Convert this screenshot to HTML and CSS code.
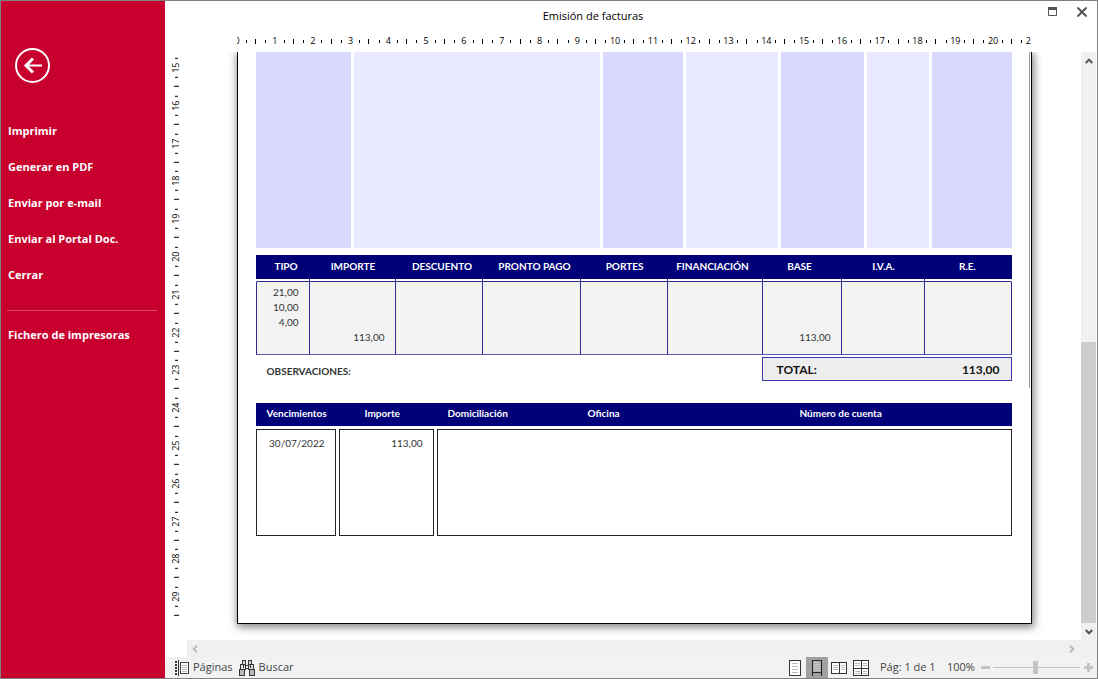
FILE: index.html
```html
<!DOCTYPE html>
<html lang="es">
<head>
<meta charset="utf-8">
<title>Emisión de facturas</title>
<link rel="stylesheet" href="styles.css">
</head>
<body>
<div class="window">
  <aside class="sidebar">
    <button class="back" type="button" aria-label="Volver">
      <svg width="36" height="36" viewBox="0 0 36 36" fill="none" stroke="#fff">
        <circle cx="18.500" cy="17.500" r="16.500" stroke-width="2"/>
        <path d="M28 17.500H12" stroke-width="2"/>
        <path d="M19 10.500L12 17.500L19 24.500" stroke-width="3"/>
      </svg>
    </button>
    <nav class="menu">
      <a href="#">Imprimir</a>
      <a href="#">Generar en PDF</a>
      <a href="#">Enviar por e-mail</a>
      <a href="#">Enviar al Portal Doc.</a>
      <a href="#">Cerrar</a>
      <hr>
      <a href="#">Fichero de impresoras</a>
    </nav>
  </aside>
  <main class="main">
    <header class="titlebar">
      <h1>Emisión de facturas</h1>
      <div class="controls">
        <button type="button" aria-label="Maximizar"><svg width="10" height="10" viewBox="0 0 10 10"><path d="M.5 1v7.500h8V1" fill="none" stroke="#555"/><path d="M0 0h9v3H0z" fill="#555"/></svg></button>
        <button type="button" aria-label="Cerrar ventana"><svg width="10" height="10" viewBox="0 0 10 10" stroke="#555" stroke-width="2"><path d="M.5 .5l9 9M9.500 .5l-9 9"/></svg></button>
      </div>
    </header>
    <div class="ruler-row">
      <div class="hruler">
        <span>0</span><span>1</span><span>2</span><span>3</span><span>4</span><span>5</span><span>6</span><span>7</span><span>8</span><span>9</span><span>10</span><span>11</span><span>12</span><span>13</span><span>14</span><span>15</span><span>16</span><span>17</span><span>18</span><span>19</span><span>20</span><span>21</span>
      </div>
    </div>
    <div class="workspace">
      <div class="vruler">
        <div class="vscale">
          <span>15</span><span>16</span><span>17</span><span>18</span><span>19</span><span>20</span><span>21</span><span>22</span><span>23</span><span>24</span><span>25</span><span>26</span><span>27</span><span>28</span><span>29</span>
        </div>
      </div>
      <div class="viewport">
        <article class="paper">
          <div class="stripes"><i></i><i></i><i></i><i></i><i></i><i></i><i></i></div>
          <table class="taxes">
            <colgroup><col class="w53"><col class="w86"><col class="w87"><col class="w98"><col class="w87"><col class="w95"><col class="w79"><col class="w83"><col class="w88"></colgroup>
            <thead>
              <tr><th class="push-m">TIPO</th><th class="push-s">IMPORTE</th><th class="push-m">DESCUENTO</th><th class="push-m">PRONTO PAGO</th><th class="push-s">PORTES</th><th class="pull-s">FINANCIACIÓN</th><th class="pull-s">BASE</th><th class="push-s">I.V.A.</th><th>R.E.</th></tr>
            </thead>
            <tbody>
              <tr class="joint"><td></td><td></td><td></td><td></td><td></td><td></td><td></td><td></td><td></td></tr>
              <tr class="first"><td>21,00</td><td></td><td></td><td></td><td></td><td></td><td></td><td></td><td></td></tr>
              <tr><td>10,00</td><td></td><td></td><td></td><td></td><td></td><td></td><td></td><td></td></tr>
              <tr><td>4,00</td><td></td><td></td><td></td><td></td><td></td><td></td><td></td><td></td></tr>
              <tr class="last"><td></td><td>113,00</td><td></td><td></td><td></td><td></td><td>113,00</td><td></td><td></td></tr>
            </tbody>
          </table>
          <div class="summary">
            <p class="notes">OBSERVACIONES:</p>
            <p class="total"><span>TOTAL:</span><span>113,00</span></p>
          </div>
          <table class="dues">
            <colgroup><col class="w83"><col class="w98"><col class="w140"><col class="w212"><col class="w223"></colgroup>
            <thead>
              <tr><th>Vencimientos</th><th class="amount">Importe</th><th>Domiciliación</th><th>Oficina</th><th>Número de cuenta</th></tr>
            </thead>
            <tbody>
              <tr><td><div class="box">30/07/2022</div></td><td><div class="box">113,00</div></td><td colspan="3"><div class="box"></div></td></tr>
            </tbody>
          </table>
        </article>
      </div>
      <div class="vscroll">
        <button type="button" aria-label="Subir"><svg width="8" height="6" viewBox="0 0 8 6" fill="none" stroke="#555" stroke-width="2"><path d="M.7 5L4 1.700 7.300 5"/></svg></button>
        <div class="track"></div>
        <div class="thumb"></div>
        <button type="button" aria-label="Bajar"><svg width="8" height="6" viewBox="0 0 8 6" fill="none" stroke="#555" stroke-width="2"><path d="M.7 1L4 4.300 7.300 1"/></svg></button>
      </div>
    </div>
    <div class="hscroll">
      <button type="button" aria-label="Izquierda"><svg width="6" height="8" viewBox="0 0 6 8" fill="none" stroke="#bbb" stroke-width="2"><path d="M5 .7L1.700 4 5 7.300"/></svg></button>
      <button type="button" aria-label="Derecha"><svg width="6" height="8" viewBox="0 0 6 8" fill="none" stroke="#bbb" stroke-width="2"><path d="M1 .7L4.300 4 1 7.300"/></svg></button>
    </div>
    <footer class="status">
      <button class="tool" type="button">
        <svg width="14" height="16" viewBox="0 0 14 16" shape-rendering="crispEdges"><path d="M1 1v15" stroke="#333" stroke-width="2" stroke-dasharray="2 1"/><path d="M3.500 0v16" stroke="#333"/><path d="M5.500 2.500h8v11h-8z" fill="#fff" stroke="#444"/><path d="M7 5.500h5M7 7.500h5M7 9.500h5M7 11.500h5" stroke="#bbb"/></svg>
        <span>Páginas</span>
      </button>
      <button class="tool" type="button">
        <svg width="16" height="16" viewBox="0 0 16 16" shape-rendering="crispEdges"><path d="M3.500 .5h3v4h-3zM9.500 .5h3v4h-3z" fill="#ddd" stroke="#333"/><path d="M1.500 4.500h5v5h-5zM9.500 4.500h5v5h-5z" fill="#ddd" stroke="#333"/><path d="M6.500 5.500h3v3h-3z" fill="#fff" stroke="#333"/><path d="M.5 9.500h5v6h-5zM10.500 9.500h5v6h-5z" fill="#bbb" stroke="#333"/><path d="M4.500 5v3M11.500 5v3" stroke="#333"/></svg>
        <span>Buscar</span>
      </button>
      <div class="views">
        <button type="button" aria-label="Una página"><svg width="12" height="16" viewBox="0 0 12 16" shape-rendering="crispEdges"><path d="M.5 .5h11v15H.5z" fill="#fff" stroke="#333"/><path d="M3 3.500h6M3 6.500h6M3 9.500h6M3 12.500h6" stroke="#bbb"/></svg></button>
        <button class="active" type="button" aria-label="Ancho de página"><svg width="12" height="16" viewBox="0 0 12 16" shape-rendering="crispEdges"><path d="M1.500 .5h9V12h-9z" fill="#aaa" stroke="#333"/><path d="M3 2.500h6M3 4.500h6M3 6.500h6M3 8.500h6M3 10.500h6" stroke="#ccc"/><path d="M1.500 16V0M10.500 16V0M1 12.500h10" fill="none" stroke="#222"/></svg></button>
        <button type="button" aria-label="Dos páginas"><svg width="16" height="12" viewBox="0 0 16 12" shape-rendering="crispEdges"><path d="M.5 .5h15v11H.5z" fill="#fff" stroke="#333"/><path d="M8.500 0v12" stroke="#333"/><path d="M2 3.500h5M2 5.500h5M2 7.500h5M10 3.500h4M10 5.500h4M10 7.500h4" stroke="#bbb"/></svg></button>
        <button type="button" aria-label="Varias páginas"><svg width="16" height="16" viewBox="0 0 16 16" shape-rendering="crispEdges"><path d="M.5 .5h15v15H.5z" fill="#fff" stroke="#333"/><path d="M8.500 0v16M0 8.500h16" stroke="#333"/><path d="M2 3.500h5M2 5.500h5M10 3.500h4M10 5.500h4M2 11.500h5M2 13.500h5M10 11.500h4M10 13.500h4" stroke="#bbb"/></svg></button>
      </div>
      <span class="page-no">Pág: 1 de 1</span>
      <label class="zoom-value" for="zoom">100%</label>
      <button class="step" type="button" aria-label="Reducir"><svg width="9" height="9" viewBox="0 0 9 9"><path d="M0 4.500h9" stroke="#c4c4c4" stroke-width="3"/></svg></button>
      <input class="zoom" id="zoom" type="range" min="0" max="100" value="49">
      <button class="step" type="button" aria-label="Ampliar"><svg width="9" height="9" viewBox="0 0 9 9"><path d="M0 4.500h9M4.500 0v9" stroke="#c4c4c4" stroke-width="3"/></svg></button>
    </footer>
  </main>
</div>
</body>
</html>
```

FILE: styles.css
```css
* { box-sizing: border-box; }
body { margin: 0; font-family: "Open Sans", "Noto Sans", sans-serif; font-size: 11px; color: #444; background: #fff; }
button { display: flex; align-items: center; justify-content: center; padding: 0; border: 0; background: none; font: inherit; color: inherit; }
svg { display: block; flex: none; }
h1, p { margin: 0; }

.window { display: flex; height: 100vh; border: 1px solid #808080; }

.sidebar { flex: none; width: 164px; background: #c8002d; padding-top: 47px; }
.back { margin-left: 13px; }
.menu { display: flex; flex-direction: column; padding: 29px 7px 0; }
.menu a { height: 36px; line-height: 36px; color: #fff; font-size: 11px; font-weight: 700; text-decoration: none; white-space: nowrap; }
.menu hr { width: 150px; height: 1px; margin: 17px 0 6px -1px; border: 0; background: #d84a5e; }

.main { flex: 1; min-width: 0; display: flex; flex-direction: column; }
.titlebar { position: relative; flex: none; height: 28px; display: flex; justify-content: center; align-items: center; }
.titlebar h1 { padding-right: 76px; font-size: 11px; font-weight: 400; color: #000; }
.controls { position: absolute; right: 10px; top: 6px; display: flex; gap: 19px; }

.ruler-row { flex: none; height: 23px; padding: 2px 16px 0 22px; display: flex; justify-content: center; }
.hruler { flex: none; width: 794px; display: flex; justify-content: center; overflow: hidden; font-size: 9px; line-height: 19px; color: #000; }
.hruler span {
  flex: 0 0 calc(100% / 21); text-align: center;
  background: linear-gradient(#000, #000) 100% 8px / 1px 5px no-repeat,
    linear-gradient(#000, #000) 25% 9px / 1px 3px no-repeat,
    linear-gradient(#000, #000) 75% 9px / 1px 3px no-repeat;
}

.workspace { flex: 1; min-height: 0; display: flex; }
.vruler { flex: none; width: 22px; display: flex; flex-direction: column; overflow: hidden; font-size: 9px; color: #000; }
.vscale { flex: none; height: 567px; margin-top: -3px; display: grid; grid-template-rows: repeat(15, 1fr); }
.vscale span {
  display: flex; align-items: center; justify-content: center; writing-mode: vertical-rl; transform: rotate(180deg); line-height: 22px;
  background: linear-gradient(#000, #000) 8px 0 / 5px 1px no-repeat,
    linear-gradient(#000, #000) 9px 25% / 3px 1px no-repeat,
    linear-gradient(#000, #000) 9px 75% / 3px 1px no-repeat;
}

.viewport { flex: 1; min-width: 0; display: flex; justify-content: center; align-items: flex-start; overflow: hidden; }
.paper {
  position: relative; flex: none; width: 795px; padding: 0 19px 87px 18px; border: 1px solid #000; border-top: 0; background: #fff;
  box-shadow: 1px 2px 8px 1px rgba(0, 0, 0, .5); font-family: Lato, sans-serif; font-size: 10px; color: #333;
}
.paper::after { content: ""; position: absolute; top: 0; right: 1px; width: 1px; height: 336px; background: #999; }

.stripes { display: grid; grid-template-columns: 95fr 246fr 80fr 92fr 83fr 62fr 80fr; gap: 3px; height: 196px; }
.stripes i { background: #d9d9ff; }
.stripes i:nth-child(even) { background: #e9e9ff; }

table { width: 100%; table-layout: fixed; border-collapse: separate; border-spacing: 0; }
th { height: 24px; padding: 0 0 2px; background: #000078; color: #fff; font-weight: 700; white-space: nowrap; }
.w53 { width: 53px; } .w79 { width: 79px; } .w83 { width: 83px; } .w86 { width: 86px; } .w87 { width: 87px; } .w88 { width: 88px; }
.w95 { width: 95px; } .w98 { width: 98px; } .w140 { width: 140px; } .w212 { width: 212px; } .w223 { width: 223px; }

.taxes { margin-top: 7px; }
.taxes .push-m { padding-left: 8px; }
.taxes .push-s { padding-left: 3px; }
.taxes .pull-s { padding-right: 3px; }
.taxes td { height: 15px; padding: 0 10px 0 0; border-left: 1px solid #2c2c92; background: #f3f3f3; text-align: right; line-height: 15px; }
.taxes td:last-child { border-right: 1px solid #2c2c92; }
.taxes .joint td { height: 3px; line-height: 0; background: #fff; border-bottom: 1px solid #2c2c92; }
.taxes .joint td:first-child { border-left-color: #fff; }
.taxes .joint td:last-child { border-right-color: #fff; }
.taxes .first td { height: 18px; padding-top: 3px; }
.taxes .last td { height: 25px; padding-bottom: 9px; border-bottom: 1px solid #5c5cae; }

.summary { display: flex; justify-content: space-between; margin-top: 2px; }
.notes { padding-left: 11px; font-weight: 700; line-height: 29px; }
.total { display: flex; justify-content: space-between; width: 250px; height: 24px; padding: 0 11px 0 14px; border: 1px solid #3c3cb0; background: #eee; color: #111; font-size: 12px; font-weight: 700; line-height: 23px; }

.dues { margin-top: 17px; }
.dues th { height: 23px; padding: 0 0 3px 11px; text-align: left; }
.dues .amount { padding-left: 26px; }
.dues td { padding: 3px 3px 0 0; vertical-align: top; }
.dues td:last-child { padding-right: 0; }
.box { height: 107px; padding: 4px 10px; border: 1px solid #222; text-align: right; line-height: 18px; }

.vscroll { flex: none; width: 15px; margin-right: 1px; display: flex; flex-direction: column; background: #f0f0f0; }
.vscroll button { height: 17px; }
.track { flex: 273; }
.thumb { flex: 281; background: #cdcdcd; }

.hscroll { flex: none; height: 17px; margin-left: 22px; padding: 0 22px 0 5px; display: flex; justify-content: space-between; background: #f0f0f0; }

.status { flex: none; height: 21px; display: flex; align-items: center; padding: 0 4px 0 10px; background: #f2f2f2; white-space: nowrap; }
.status span, .status label { padding-bottom: 2px; }
.tool { gap: 4px; margin-right: 6px; }
.views { display: flex; align-self: stretch; margin: 0 8px 0 auto; }
.views button { width: 22px; }
.views .active { background: #a0a0a0; }
.page-no { width: 67px; }
.zoom-value { width: 33px; }
.step { width: 10px; }
.zoom { appearance: none; width: 87px; height: 16px; margin: 0 3px; background: linear-gradient(#c4c4c4, #c4c4c4) 0 50% / 100% 1px no-repeat; }
.zoom::-webkit-slider-thumb { appearance: none; width: 5px; height: 13px; background: #c4c4c4; }
```
